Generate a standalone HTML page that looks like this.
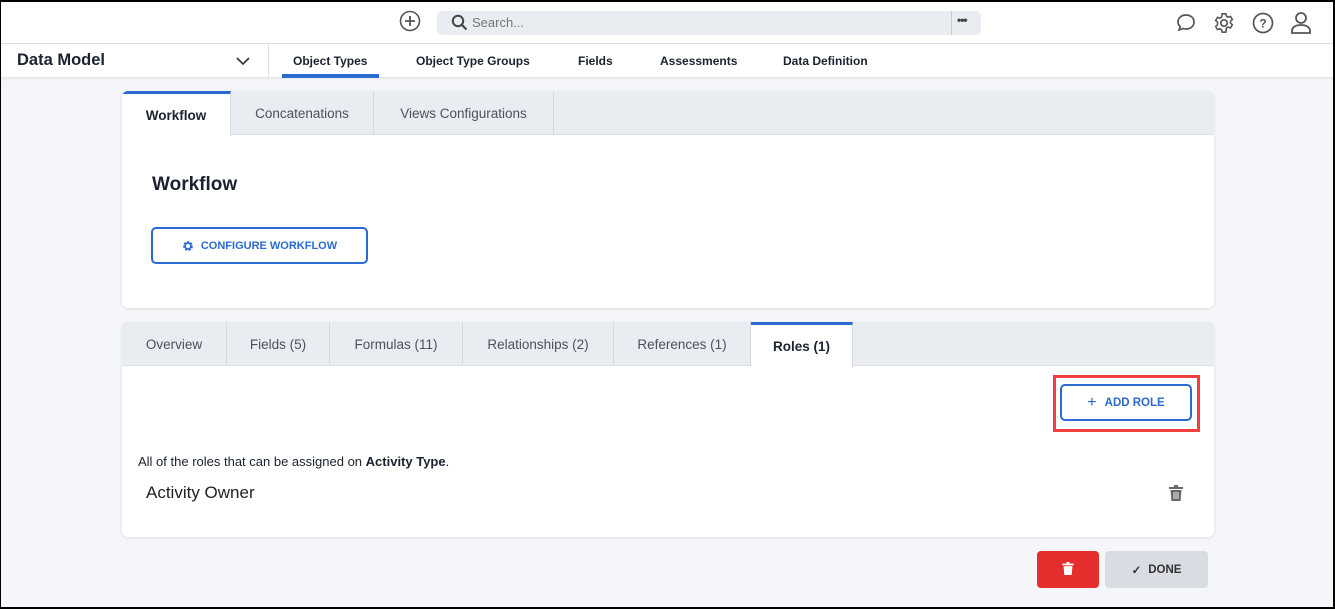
<!DOCTYPE html><html><head><style>
*{box-sizing:border-box;margin:0;padding:0}
body{width:1335px;height:609px;overflow:hidden;font-family:"Liberation Sans",sans-serif;background:#f4f6fa;position:relative;color:#1b2230}
.frame{position:absolute;inset:0;border:2px solid #000;border-left-width:1px;pointer-events:none;z-index:9}
.top{position:absolute;left:0;top:0;width:1335px;height:44px;background:#fff;border-bottom:1px solid #dde1e7}
.nav{position:absolute;left:0;top:44px;width:1335px;height:34px;background:#fff;border-bottom:1px solid #e3e6eb;box-shadow:0 1px 3px rgba(0,0,0,.06)}
.abs{position:absolute}
.card{position:absolute;background:#fff;border-radius:6px;box-shadow:0 1px 3px rgba(0,0,0,.1);overflow:hidden}
.tabs{position:absolute;left:0;top:0;right:0;height:44px;background:#e9ecf0;border-bottom:1px solid #dde1e7}
.tab{position:absolute;top:0;height:44px;font-size:13.5px;color:#4a5260;display:flex;align-items:center;justify-content:center;border-right:1px solid #d5d9df}
.tab.on{background:#fff;color:#1b2230;font-weight:bold;border-top:3px solid #2a6bd1;height:45px}
.btn{position:absolute;border:2px solid #2a6bd1;border-radius:5px;color:#2a6bd1;font-weight:bold;font-size:11px;display:flex;align-items:center;justify-content:center;background:#fff}
</style></head><body>
<div class="top">
 <svg class="abs" style="left:399px;top:10px" width="22" height="22" viewBox="0 0 22 22"><circle cx="11" cy="11" r="9.5" fill="none" stroke="#555" stroke-width="1.6"/><path d="M11 6v10M6 11h10" stroke="#555" stroke-width="1.8"/></svg>
 <div class="abs" style="left:437px;top:11px;width:544px;height:24px;background:#e9ecf0;border-radius:5px"></div>
 <svg class="abs" style="left:451px;top:14px" width="17" height="17" viewBox="0 0 17 17"><circle cx="7" cy="7" r="5.2" fill="none" stroke="#444" stroke-width="2"/><path d="M11 11l4.5 4.5" stroke="#444" stroke-width="2.2"/></svg>
 <div class="abs" style="left:472px;top:15px;font-size:13px;color:#777">Search...</div>
 <div class="abs" style="left:951px;top:11px;width:1px;height:24px;background:#ccc"></div>
 <div class="abs" style="left:957px;top:13px;font-size:12px;color:#444;font-weight:bold;letter-spacing:-1px">•••</div>
 <svg class="abs" style="left:1175px;top:12px" width="22" height="22" viewBox="0 0 22 22"><path d="M11 3c4.7 0 8 3 8 7s-3.3 7-8 7c-1 0-2-.2-2.8-.5L4 18l1.3-3.3C3.8 13.4 3 11.8 3 10c0-4 3.3-7 8-7z" fill="none" stroke="#555" stroke-width="1.7"/></svg>
 <svg class="abs" style="left:1213px;top:12px" width="22" height="22" viewBox="0 0 24 24"><path d="M12 8.5a3.5 3.5 0 100 7 3.5 3.5 0 000-7z" fill="none" stroke="#555" stroke-width="1.8"/><path d="M10 2h4l.6 2.6 2 1.1 2.5-.9 2 3.4-2 1.8v2.2l2 1.8-2 3.4-2.5-.9-2 1.1L14 22h-4l-.6-2.6-2-1.1-2.5.9-2-3.4 2-1.8V11l-2-1.8 2-3.4 2.5.9 2-1.1z" fill="none" stroke="#555" stroke-width="1.7"/></svg>
 <svg class="abs" style="left:1252px;top:12px" width="22" height="22" viewBox="0 0 22 22"><circle cx="11" cy="11" r="9.5" fill="none" stroke="#555" stroke-width="1.7"/><text x="11" y="15.5" font-size="12" font-weight="bold" text-anchor="middle" fill="#555" font-family="Liberation Sans">?</text></svg>
 <svg class="abs" style="left:1290px;top:11px" width="22" height="24" viewBox="0 0 22 24"><circle cx="11" cy="7" r="5" fill="none" stroke="#555" stroke-width="1.8"/><path d="M2 22v-2c0-4 4-6 9-6s9 2 9 6v2z" fill="none" stroke="#555" stroke-width="1.8"/></svg>
</div>
<div class="nav">
 <div class="abs" style="left:17px;top:7px;font-size:16.5px;font-weight:bold">Data Model</div>
 <svg class="abs" style="left:236px;top:12px" width="14" height="10" viewBox="0 0 14 10"><path d="M1 2l6 6 6-6" fill="none" stroke="#333" stroke-width="1.6"/></svg>
 <div class="abs" style="left:268px;top:0;width:1px;height:34px;background:#dde1e7"></div>
 <div class="abs" style="left:293px;top:10px;font-size:12px;font-weight:bold">Object Types</div>
 <div class="abs" style="left:282px;top:30px;width:97px;height:4px;background:#2a6bd1"></div>
 <div class="abs" style="left:416px;top:10px;font-size:12px;font-weight:bold">Object Type Groups</div>
 <div class="abs" style="left:578px;top:10px;font-size:12px;font-weight:bold">Fields</div>
 <div class="abs" style="left:660px;top:10px;font-size:12px;font-weight:bold">Assessments</div>
 <div class="abs" style="left:783px;top:10px;font-size:12px;font-weight:bold">Data Definition</div>
</div>
<div class="card" style="left:122px;top:91px;width:1092px;height:217px">
 <div class="tabs"></div>
 <div class="tab on" style="left:0;width:109px">Workflow</div>
 <div class="tab" style="left:109px;width:143px">Concatenations</div>
 <div class="tab" style="left:252px;width:180px">Views Configurations</div>
 <div class="abs" style="left:30px;top:83px;font-size:19px;font-weight:bold">Workflow</div>
 <div class="btn" style="left:29px;top:136px;width:217px;height:37px"><svg width="12" height="12" viewBox="0 0 12 12" style="margin-right:7px"><circle cx="6" cy="6" r="3.6" fill="none" stroke="#2a6bd1" stroke-width="2.6" stroke-dasharray="2 1.2"/><circle cx="6" cy="6" r="3" fill="none" stroke="#2a6bd1" stroke-width="1.6"/></svg>CONFIGURE WORKFLOW</div>
</div>
<div class="card" style="left:122px;top:322px;width:1092px;height:215px">
 <div class="tabs"></div>
 <div class="tab" style="left:0;width:105px">Overview</div>
 <div class="tab" style="left:105px;width:103px">Fields (5)</div>
 <div class="tab" style="left:208px;width:133px">Formulas (11)</div>
 <div class="tab" style="left:341px;width:151px">Relationships (2)</div>
 <div class="tab" style="left:492px;width:137px">References (1)</div>
 <div class="tab on" style="left:629px;width:102px">Roles (1)</div>
 <div class="abs" style="left:931px;top:53px;width:147px;height:57px;border:3px solid #f04040"></div>
 <div class="btn" style="left:938px;top:62px;width:132px;height:37px;font-size:11.5px"><span style="font-size:16px;font-weight:normal;margin-right:8px">+</span>ADD ROLE</div>
 <div class="abs" style="left:16px;top:132px;font-size:13px">All of the roles that can be assigned on <b>Activity Type</b>.</div>
 <div class="abs" style="left:24px;top:161px;font-size:17px;color:#222">Activity Owner</div>
 <svg class="abs" style="left:1047px;top:163px" width="14" height="16" viewBox="0 0 14 16"><path d="M0 2h14v2H0zM5 0h4v2H5zM1.5 5h11l-1 11h-9z" fill="#666"/><path d="M5 7v7M7 7v7M9 7v7" stroke="#fff" stroke-width=".9"/></svg>
</div>
<div class="abs" style="left:1037px;top:551px;width:62px;height:37px;background:#e52d2d;border-radius:4px"></div>
<svg class="abs" style="left:1062px;top:562px" width="12" height="13" viewBox="0 0 14 16"><path d="M0 2h14v2H0zM5 0h4v2H5zM1.5 5h11l-1 11h-9z" fill="#fff"/></svg>
<div class="abs" style="left:1105px;top:551px;width:103px;height:37px;background:#d9dde3;border-radius:4px;display:flex;align-items:center;justify-content:center;font-size:11.5px;font-weight:bold;color:#333"><span style="margin-right:7px">✓</span>DONE</div>
<div class="frame"></div>
</body></html>
